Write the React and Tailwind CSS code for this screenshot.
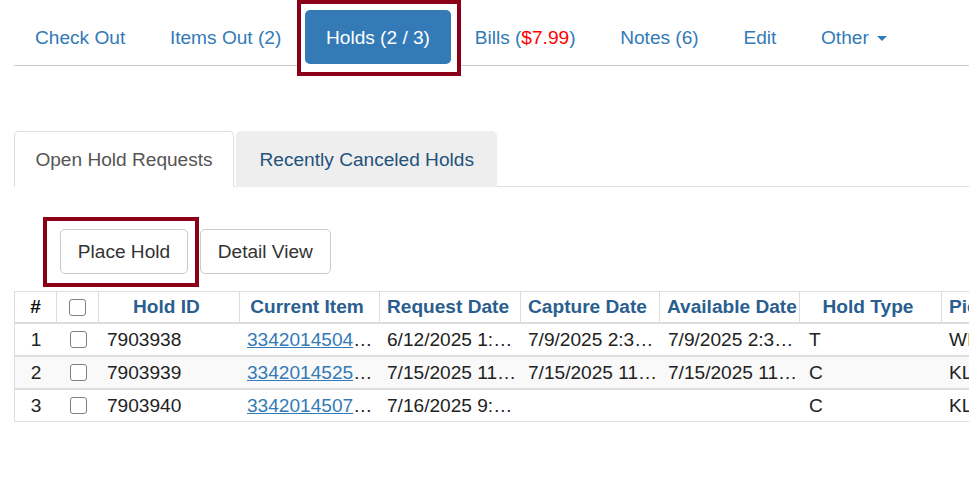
import React from "react";

const navItems = [
  { label: "Check Out" },
  { label: "Items Out (2)" },
  { label: "Holds (2 / 3)", active: true },
  { label: "Bills", bill: "$7.99" },
  { label: "Notes (6)" },
  { label: "Edit" },
  { label: "Other", caret: true },
];

const headers = [
  { key: "num", label: "#" },
  { key: "check", label: "" },
  { key: "id", label: "Hold ID" },
  { key: "item", label: "Current Item" },
  { key: "request", label: "Request Date" },
  { key: "capture", label: "Capture Date" },
  { key: "available", label: "Available Date" },
  { key: "type", label: "Hold Type" },
  { key: "pickup", label: "Pickup Library" },
];

const holds = [
  {
    id: "7903938",
    item: "33420145041872",
    request: "6/12/2025 1:41 PM",
    capture: "7/9/2025 2:36 PM",
    available: "7/9/2025 2:36 PM",
    type: "T",
    pickup: "WILLOW",
  },
  {
    id: "7903939",
    item: "33420145259037",
    request: "7/15/2025 11:02 AM",
    capture: "7/15/2025 11:20 AM",
    available: "7/15/2025 11:20 AM",
    type: "C",
    pickup: "KLAMATH",
  },
  {
    id: "7903940",
    item: "33420145073316",
    request: "7/16/2025 9:14 AM",
    capture: "",
    available: "",
    type: "C",
    pickup: "KLAMATH",
  },
];

// column widths include the right-hand border of each header cell
const gridCols = "grid grid-cols-[42px_42px_141px_140px_141px_139px_140px_142px_150px]";

function Checkbox() {
  return (
    <input
      type="checkbox"
      className="block appearance-none w-[17px] h-[17px] border border-[#808080] rounded-[3px] bg-white"
    />
  );
}

function TopNav() {
  return (
    <ul className="flex items-start gap-[2.7px] mt-[10px] pb-px border-b border-[#cccccc]">
      {navItems.map((item) => (
        <li key={item.label} className="relative">
          {item.active ? (
            <span className="absolute -left-[8px] -right-[10px] -top-[10px] -bottom-[12px] border-4 border-[#8b0018] bg-white" />
          ) : null}
          <a
            href="#"
            className={
              item.active
                ? "relative block px-[21px] py-[13.5px] rounded-[5px] bg-[#337ab7] text-white"
                : "relative block px-[21px] py-[13.5px] text-[#337ab7]"
            }
          >
            {item.label}
            {item.bill ? (
              <>
                {" ("}
                <span className="text-[#ff0000]">{item.bill}</span>
                {")"}
              </>
            ) : null}
            {item.caret ? (
              <>
                {" "}
                <span className="inline-block align-middle ml-[2.7px] w-0 h-0 border-x-[5.4px] border-x-transparent border-t-[5.4px] border-t-[#337ab7]" />
              </>
            ) : null}
          </a>
        </li>
      ))}
    </ul>
  );
}

function SubTabs() {
  return (
    <ul className="flex mt-[65px] border-b border-[#dddddd]">
      <li className="-mb-px mr-[2px]">
        <a
          href="#"
          className="block px-[20.4px] py-[13.5px] border border-[#dddddd] border-b-transparent rounded-t-[5px] bg-white text-[#555555]"
        >
          Open Hold Requests
        </a>
      </li>
      <li className="-mb-px">
        <a
          href="#"
          className="block px-[22.5px] py-[13.5px] border border-[#eeeeee] rounded-t-[5px] bg-[#eeeeee] text-[#23527c]"
        >
          Recently Canceled Holds
        </a>
      </li>
    </ul>
  );
}

function Toolbar() {
  return (
    <div className="flex gap-[12px] mt-[42px] ml-[46px]">
      <div className="relative">
        <span className="absolute -left-[17px] -right-[11px] -top-[12px] -bottom-[13px] border-4 border-[#8b0018]" />
        <button className="relative px-[16.8px] py-[8.1px] border border-[#cccccc] rounded-[5px] bg-white text-[#333333]">
          Place Hold
        </button>
      </div>
      <button className="px-[16.8px] py-[8.1px] border border-[#cccccc] rounded-[5px] bg-white text-[#333333]">
        Detail View
      </button>
    </div>
  );
}

function HoldsTable() {
  return (
    <div className="mt-[17px] w-max border border-[#dddddd]">
      <div className={`${gridCols} border-b-2 border-[#dddddd] h-[32px] leading-[30px] font-bold`}>
        {headers.map((col) =>
          col.key === "check" ? (
            <div key={col.key} className="flex items-center justify-center border-r border-[#dddddd]">
              <Checkbox />
            </div>
          ) : (
            <div
              key={col.key}
              className={
                col.key === "num"
                  ? "border-r border-[#dddddd] text-center text-[#111111]"
                  : "border-r border-[#dddddd] pl-[7px] pr-[12px] text-center text-[#2a5e8f] whitespace-nowrap overflow-hidden"
              }
            >
              {col.label}
            </div>
          )
        )}
      </div>
      {holds.map((hold, i) => (
        <div
          key={hold.id}
          className={`${gridCols} leading-[31px] ${i > 0 ? "h-[33px] border-t-2 border-[#dddddd]" : "h-[31px]"} ${
            i === 1 ? "bg-[#f9f9f9]" : "bg-white"
          }`}
        >
          <div className="text-center">{i + 1}</div>
          <div className="flex items-center justify-center">
            <Checkbox />
          </div>
          <div className="pl-[8px] pr-[7px] truncate">{hold.id}</div>
          <div className="px-[7px] truncate">
            <a href="#" className="text-[#337ab7] underline">
              {hold.item}
            </a>
          </div>
          <div className="pl-[7px] truncate">{hold.request}</div>
          <div className="pl-[7px] truncate">{hold.capture}</div>
          <div className="pl-[8px] truncate">{hold.available}</div>
          <div className="pl-[9px] pr-[7px] truncate">{hold.type}</div>
          <div className="px-[7px] truncate">{hold.pickup}</div>
        </div>
      ))}
    </div>
  );
}

export default function App() {
  return (
    <div className="w-full min-h-[485px] overflow-hidden bg-white pl-[14px] font-['Liberation_Sans',Arial,sans-serif] text-[19.1px] leading-[27px] text-[#222222]">
      <TopNav />
      <SubTabs />
      <Toolbar />
      <HoldsTable />
    </div>
  );
}
